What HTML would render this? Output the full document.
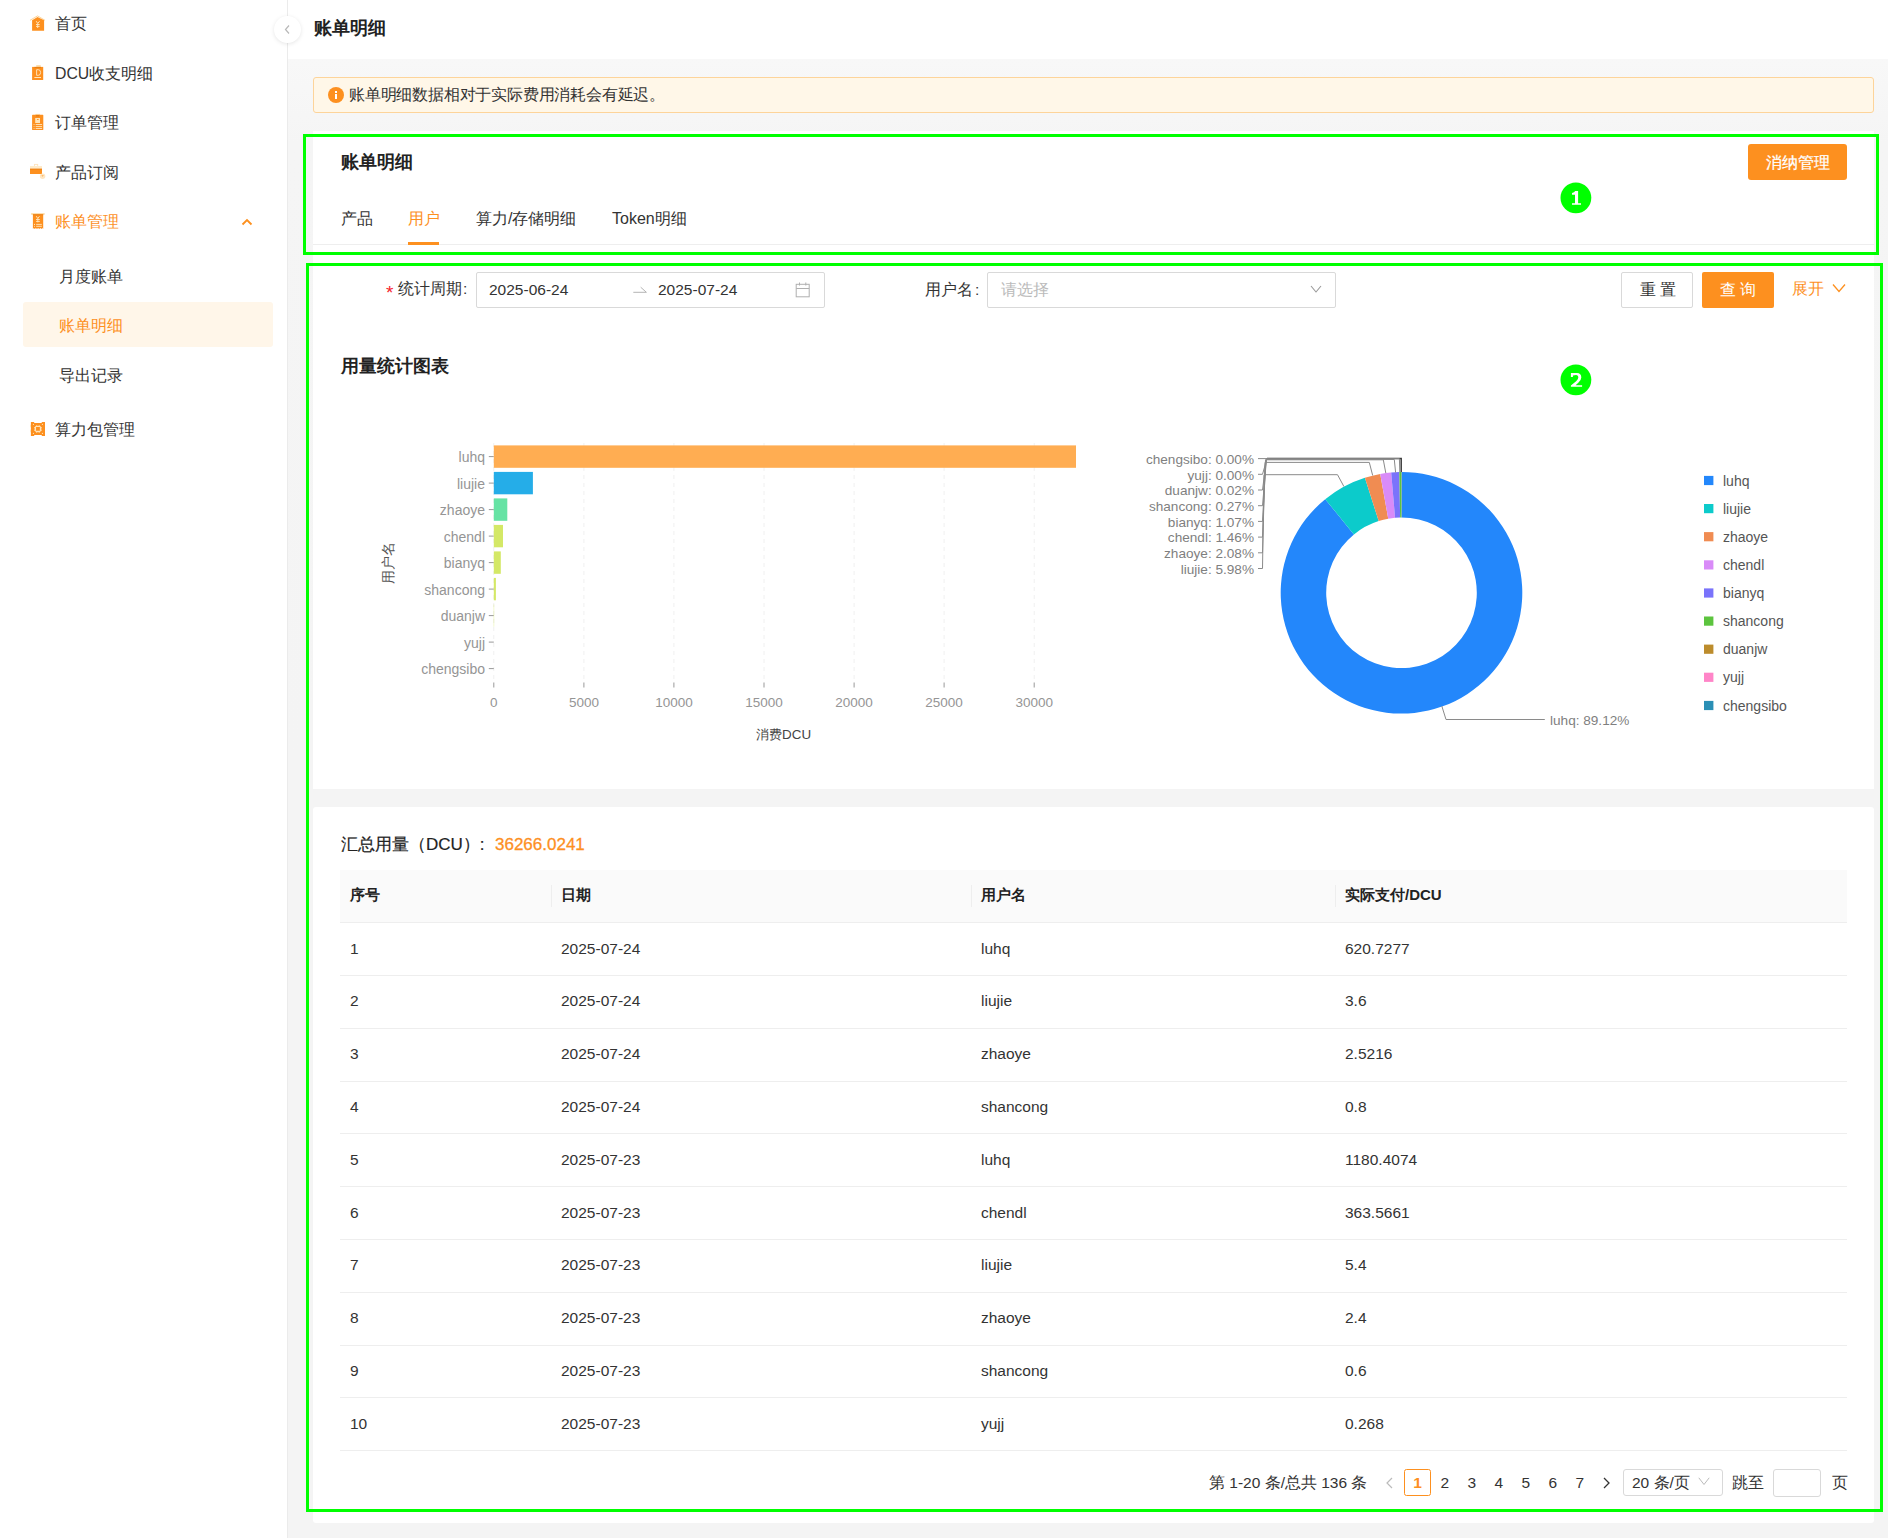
<!DOCTYPE html>
<html><head><meta charset="utf-8">
<style>
*{box-sizing:border-box;margin:0;padding:0}
html,body{width:1888px;height:1538px;overflow:hidden;background:#f4f4f4;font-family:"Liberation Sans",sans-serif;color:#333}
.a{position:absolute}
.t{position:absolute;white-space:nowrap;line-height:20px;height:20px}
.sb{font-size:15.8px;color:#333}

.ico{position:absolute}
.th{font-weight:bold;font-size:15px;color:#222}
.td{font-size:15.5px;color:#333}
.rl{position:absolute;left:340px;width:1507px;height:1px;background:#eeeeee}
.pg{font-size:15.5px;color:#333}
.or{color:#fd901f}
.gb{position:absolute;border:3px solid #00ff00}
.gc{position:absolute;width:31px;height:31px;border-radius:50%;background:#00ff00;color:#fff;font-weight:bold;font-family:"Liberation Mono",monospace;font-size:19px;line-height:31px;text-align:center}
</style></head><body>
<!-- sidebar -->
<div class="a" style="left:0;top:0;width:287px;height:1538px;background:#fff"></div>
<div class="a" style="left:287px;top:0;width:1px;height:1538px;background:#ebebeb"></div>
<!-- header -->
<div class="a" style="left:288px;top:0;width:1600px;height:59px;background:#fff"></div>
<div class="a" style="left:288px;top:59px;width:1600px;height:1479px;background:linear-gradient(#f8f8f8 0px,#f5f5f5 85px,#f4f4f4 700px)"></div>

<!-- sidebar items -->
<div class="t sb" style="left:55px;top:13.5px">首页</div>
<div class="t sb" style="left:55px;top:63.5px">DCU收支明细</div>
<div class="t sb" style="left:55px;top:112.5px">订单管理</div>
<div class="t sb" style="left:55px;top:162.5px">产品订阅</div>
<div class="t sb or" style="left:55px;top:212px">账单管理</div>
<svg class="ico" style="left:240px;top:216.5px" width="14" height="10" viewBox="0 0 14 10"><path d="M2.5 7.5 L7 3 L11.5 7.5" fill="none" stroke="#fd901f" stroke-width="1.8"/></svg>
<div class="t sb" style="left:59px;top:266.5px">月度账单</div>
<div class="a" style="left:23px;top:302px;width:250px;height:45px;background:#fff6e9;border-radius:3px"></div>
<div class="t sb or" style="left:59px;top:315.5px">账单明细</div>
<div class="t sb" style="left:59px;top:365.5px">导出记录</div>
<div class="t sb" style="left:55px;top:419.5px">算力包管理</div>

<!-- sidebar icons -->
<svg class="ico" style="left:26px;top:10px" width="24" height="24" viewBox="0 0 24 24"><polyline points="4,10.3 11.5,5.9 19,10.3" fill="none" stroke="#fdd59a" stroke-width="1"/><path d="M6.1 10.2 L11.5 7 L18.1 10.2 V20.7 H6.1 Z" fill="#fd901f"/><path d="M10.2 11.2 L11.7 13.4 L13.6 11.2 M11.7 13.4 V18 M10 14.5 H13.6 M10 16.4 H13.6" fill="none" stroke="#ffe4b8" stroke-width="1"/></svg>
<svg class="ico" style="left:26px;top:60px" width="24" height="24" viewBox="0 0 24 24"><rect x="10" y="4.9" width="5" height="2.2" rx="1" fill="#fde0b0"/><rect x="6.1" y="6.9" width="11.1" height="13.1" fill="#fd901f"/><rect x="8.5" y="6.9" width="6.5" height="1.2" fill="#e27a12" opacity="0.8"/><path d="M10.6 9.7 H12.3 Q14.6 9.7 14.6 12.5 Q14.6 15.3 12.3 15.3 H10.6 Z" fill="none" stroke="#ffe4b8" stroke-width="0.95"/><rect x="8.4" y="17" width="6.6" height="1" fill="#ffe4b8"/></svg>
<svg class="ico" style="left:26px;top:110px" width="24" height="24" viewBox="0 0 24 24"><rect x="9.4" y="3.9" width="4.6" height="1.1" fill="#fde0b0"/><rect x="6.1" y="4.8" width="11.2" height="15.2" rx="0.6" fill="#fd901f"/><rect x="9.9" y="5" width="3.6" height="1.4" rx="0.7" fill="#e27a12" opacity="0.8"/><rect x="9.2" y="8" width="4.8" height="5" fill="#ffe4b8"/><ellipse cx="11.8" cy="9.4" rx="1" ry="0.5" fill="#fd901f"/><path d="M9.7 14.5 H16.1 M9.7 16.6 H16.1 M9.7 18.5 H16.1" stroke="#ffe4b8" stroke-width="0.95"/><path d="M7.2 14.5 H9 M7.2 16.6 H9 M7.2 18.5 H9" stroke="#fdb868" stroke-width="0.9"/></svg>
<svg class="ico" style="left:24px;top:158px" width="28" height="28" viewBox="0 0 28 28"><rect x="10.4" y="6.4" width="3.3" height="2" fill="none" stroke="#fee3bd" stroke-width="0.9"/><rect x="6" y="8" width="12" height="2.7" fill="#feebcb"/><rect x="6" y="10.7" width="12" height="5.3" fill="#fd901f"/><rect x="6" y="10.7" width="12" height="0.9" fill="#e27a12" opacity="0.7"/><circle cx="18.6" cy="18.2" r="2.7" fill="#fee6c2"/><path d="M17.4 17.4 L18.6 18.6 L19.8 17.4 Z" fill="#fd901f"/></svg>
<svg class="ico" style="left:26px;top:209px" width="24" height="24" viewBox="0 0 24 24"><rect x="5.1" y="4" width="13.6" height="1.9" fill="#fee0b0"/><path d="M6.9 5.3 H17.2 V20 L16.3 18.9 L15.4 20 L14.3 18.9 L13.2 20 L12.1 18.9 L11 20 L9.9 18.9 L8.8 20 L7.8 18.9 L6.9 20 Z" fill="#fd901f"/><rect x="6.9" y="5.3" width="10.3" height="0.9" fill="#e27a12" opacity="0.8"/><path d="M10.3 7.2 L11.8 9.5 L13.5 7.2 M11.8 9.5 V13.4 M10 10.5 H13.8 M10 12.4 H13.8 M10.2 15.4 H15.8 M10.2 17.3 H15.8" fill="none" stroke="#ffe4b8" stroke-width="0.95"/><circle cx="8.5" cy="15.4" r="0.55" fill="#ffe4b8"/><circle cx="8.5" cy="17.3" r="0.55" fill="#ffe4b8"/></svg>
<svg class="ico" style="left:25px;top:416px" width="26" height="26" viewBox="0 0 26 26"><path d="M5.9 5.9 H9.1 L9.3 6.9 H16.6 L16.9 5.9 H20 V20 H16.9 L16.6 19 H9.3 L9.1 20 H5.9 Z" fill="#fd901f"/><rect x="5.2" y="8.7" width="0.7" height="2.6" fill="#fedca8"/><rect x="5.2" y="13.6" width="0.7" height="2.6" fill="#fedca8"/><circle cx="8.4" cy="8.4" r="0.55" fill="#ffe4b8"/><circle cx="17.4" cy="8.4" r="0.55" fill="#ffe4b8"/><circle cx="8.4" cy="17.4" r="0.55" fill="#ffe4b8"/><circle cx="17.4" cy="17.4" r="0.55" fill="#ffe4b8"/><path d="M11.5 9.4 L11.5 10.2 H14.4 L14.4 9.4 M11.5 16.6 L11.5 15.8 H14.4 L14.4 16.6 M9.2 11.5 H10 V14.4 H9.2 M16.7 11.5 H15.9 V14.4 H16.7" fill="none" stroke="#ffe4b8" stroke-width="0.9"/><rect x="10.5" y="10.5" width="4.9" height="4.9" rx="0.6" fill="none" stroke="#ffe4b8" stroke-width="1.1"/></svg>
<!-- collapse btn -->
<div class="a" style="left:274px;top:16px;width:27px;height:27px;border-radius:50%;background:#fff;box-shadow:0 1px 4px rgba(0,0,0,0.10)"></div>
<svg class="ico" style="left:282px;top:23px" width="10" height="13" viewBox="0 0 10 13"><path d="M7 2.5 L3.5 6.5 L7 10.5" fill="none" stroke="#b8b8b8" stroke-width="1.2"/></svg>

<!-- header title -->
<div class="t" style="left:314px;top:18px;font-size:18px;font-weight:bold;color:#222">账单明细</div>

<!-- alert -->
<div class="a" style="left:313px;top:77px;width:1561px;height:36px;background:#fff7e8;border:1px solid #fdd49a;border-radius:3px"></div>
<div class="a" style="left:328px;top:87px;width:16px;height:16px;border-radius:50%;background:#fd901f"></div>
<div class="a" style="left:335px;top:91px;width:2px;height:2px;background:#fff"></div>
<div class="a" style="left:335px;top:94px;width:2px;height:5px;background:#fff"></div>
<div class="t" style="left:349px;top:85px;font-size:16px;letter-spacing:-0.2px;color:#333">账单明细数据相对于实际费用消耗会有延迟。</div>

<!-- card 1 -->
<div class="a" style="left:313px;top:131px;width:1561px;height:132px;background:#fff"></div>
<div class="t" style="left:341px;top:152px;font-size:18px;font-weight:bold;color:#222">账单明细</div>
<div class="a" style="left:1748px;top:144px;width:99px;height:36px;background:#fd901f;border-radius:3px"></div>
<div class="t" style="left:1766px;top:153px;font-size:16px;color:#fff;-webkit-text-stroke:0.25px #fff">消纳管理</div>
<div class="t" style="left:341px;top:209px;font-size:16px">产品</div>
<div class="t or" style="left:408px;top:209px;font-size:16px">用户</div>
<div class="t" style="left:476px;top:209px;font-size:16px">算力/存储明细</div>
<div class="t" style="left:612px;top:209px;font-size:16px">Token明细</div>
<div class="a" style="left:313px;top:244px;width:1561px;height:1px;background:#eeeeee"></div>
<div class="a" style="left:408px;top:242px;width:31px;height:3px;background:#fd901f"></div>

<!-- card 2 -->
<div class="a" style="left:313px;top:262px;width:1561px;height:527px;background:#fff"></div>
<div class="t" style="left:386px;top:283px;font-size:19px;color:#f5222d">*</div>
<div class="t" style="left:398px;top:279px;font-size:15.5px">统计周期<span style="margin-left:1px">:</span></div>
<div class="a" style="left:476px;top:272px;width:349px;height:36px;border:1px solid #d9d9d9;border-radius:2px"></div>
<div class="t" style="left:489px;top:280px;font-size:15.5px">2025-06-24</div>
<svg class="ico" style="left:630px;top:284px" width="20" height="12" viewBox="0 0 20 12"><path d="M3.3 8.3 H16.4 L10.7 3.2" fill="none" stroke="#b5b5b5" stroke-width="1"/></svg>
<div class="t" style="left:658px;top:280px;font-size:15.5px">2025-07-24</div>
<svg class="ico" style="left:794px;top:281px" width="17" height="17" viewBox="0 0 17 17"><rect x="2.2" y="3.3" width="13" height="12.5" fill="none" stroke="#b0b0b0" stroke-width="1"/><path d="M2.2 7.5 H15.2 M5.5 1.5 V4.5 M11.8 1.5 V4.5" stroke="#b0b0b0" stroke-width="1"/></svg>
<div class="t" style="left:925px;top:280px;font-size:15.5px">用户名<span style="margin-left:2px">:</span></div>
<div class="a" style="left:987px;top:272px;width:349px;height:36px;border:1px solid #d9d9d9;border-radius:2px"></div>
<div class="t" style="left:1001px;top:280px;font-size:15.5px;color:#bbb">请选择</div>
<svg class="ico" style="left:1309px;top:283px" width="14" height="12" viewBox="0 0 14 12"><path d="M2 3 L7 9 L12 3" fill="none" stroke="#999" stroke-width="1.1"/></svg>
<div class="a" style="left:1621px;top:272px;width:72px;height:36px;border:1px solid #d9d9d9;border-radius:2px;background:#fff"></div>
<div class="t" style="left:1640px;top:280px;font-size:16px;letter-spacing:4px">重置</div>
<div class="a" style="left:1702px;top:272px;width:72px;height:36px;background:#fd901f;border-radius:2px"></div>
<div class="t" style="left:1720px;top:280px;font-size:16px;color:#fff;letter-spacing:4px">查询</div>
<div class="t or" style="left:1792px;top:279px;font-size:15.5px">展开</div>
<svg class="ico" style="left:1831px;top:282px" width="16" height="14" viewBox="0 0 16 14"><path d="M2 2.5 L8 9.5 L14 2.5" fill="none" stroke="#fd901f" stroke-width="1.3"/></svg>

<div class="t" style="left:341px;top:356px;font-size:18px;font-weight:bold;color:#222">用量统计图表</div>

<!--CHART-->
<svg class="a" style="left:0;top:0" width="1888" height="800" viewBox="0 0 1888 800" font-family="Liberation Sans, sans-serif">
<line x1="493.8" y1="443" x2="493.8" y2="682" stroke="#f0f0f0" stroke-width="1" stroke-dasharray="4,4"/>
<line x1="493.8" y1="682.5" x2="493.8" y2="687.5" stroke="#999" stroke-width="1"/>
<text x="493.8" y="706.5" font-size="13.5" fill="#959595" text-anchor="middle">0</text>
<line x1="583.9" y1="443" x2="583.9" y2="682" stroke="#f0f0f0" stroke-width="1" stroke-dasharray="4,4"/>
<line x1="583.9" y1="682.5" x2="583.9" y2="687.5" stroke="#999" stroke-width="1"/>
<text x="583.9" y="706.5" font-size="13.5" fill="#959595" text-anchor="middle">5000</text>
<line x1="673.9" y1="443" x2="673.9" y2="682" stroke="#f0f0f0" stroke-width="1" stroke-dasharray="4,4"/>
<line x1="673.9" y1="682.5" x2="673.9" y2="687.5" stroke="#999" stroke-width="1"/>
<text x="673.9" y="706.5" font-size="13.5" fill="#959595" text-anchor="middle">10000</text>
<line x1="764.0" y1="443" x2="764.0" y2="682" stroke="#f0f0f0" stroke-width="1" stroke-dasharray="4,4"/>
<line x1="764.0" y1="682.5" x2="764.0" y2="687.5" stroke="#999" stroke-width="1"/>
<text x="764.0" y="706.5" font-size="13.5" fill="#959595" text-anchor="middle">15000</text>
<line x1="854.1" y1="443" x2="854.1" y2="682" stroke="#f0f0f0" stroke-width="1" stroke-dasharray="4,4"/>
<line x1="854.1" y1="682.5" x2="854.1" y2="687.5" stroke="#999" stroke-width="1"/>
<text x="854.1" y="706.5" font-size="13.5" fill="#959595" text-anchor="middle">20000</text>
<line x1="944.1" y1="443" x2="944.1" y2="682" stroke="#f0f0f0" stroke-width="1" stroke-dasharray="4,4"/>
<line x1="944.1" y1="682.5" x2="944.1" y2="687.5" stroke="#999" stroke-width="1"/>
<text x="944.1" y="706.5" font-size="13.5" fill="#959595" text-anchor="middle">25000</text>
<line x1="1034.2" y1="443" x2="1034.2" y2="682" stroke="#f0f0f0" stroke-width="1" stroke-dasharray="4,4"/>
<line x1="1034.2" y1="682.5" x2="1034.2" y2="687.5" stroke="#999" stroke-width="1"/>
<text x="1034.2" y="706.5" font-size="13.5" fill="#959595" text-anchor="middle">30000</text>
<line x1="488.8" y1="456.6" x2="493.8" y2="456.6" stroke="#999" stroke-width="1"/>
<text x="485" y="462.0" font-size="14" fill="#959595" text-anchor="end">luhq</text>
<rect x="493.8" y="445.4" width="582.2" height="22.4" fill="#ffad52"/>
<line x1="488.8" y1="483.1" x2="493.8" y2="483.1" stroke="#999" stroke-width="1"/>
<text x="485" y="488.5" font-size="14" fill="#959595" text-anchor="end">liujie</text>
<rect x="493.8" y="471.9" width="39.1" height="22.4" fill="#25ade8"/>
<line x1="488.8" y1="509.6" x2="493.8" y2="509.6" stroke="#999" stroke-width="1"/>
<text x="485" y="515.0" font-size="14" fill="#959595" text-anchor="end">zhaoye</text>
<rect x="493.8" y="498.4" width="13.5" height="22.4" fill="#66e3a4"/>
<line x1="488.8" y1="536.1" x2="493.8" y2="536.1" stroke="#999" stroke-width="1"/>
<text x="485" y="541.5" font-size="14" fill="#959595" text-anchor="end">chendl</text>
<rect x="493.8" y="524.9" width="9.2" height="22.4" fill="#d4e866"/>
<line x1="488.8" y1="562.6" x2="493.8" y2="562.6" stroke="#999" stroke-width="1"/>
<text x="485" y="568.0" font-size="14" fill="#959595" text-anchor="end">bianyq</text>
<rect x="493.8" y="551.4" width="7.0" height="22.4" fill="#d4e866"/>
<line x1="488.8" y1="589.1" x2="493.8" y2="589.1" stroke="#999" stroke-width="1"/>
<text x="485" y="594.5" font-size="14" fill="#959595" text-anchor="end">shancong</text>
<rect x="493.8" y="577.9" width="2.1" height="22.4" fill="#d4e866"/>
<line x1="488.8" y1="615.6" x2="493.8" y2="615.6" stroke="#999" stroke-width="1"/>
<text x="485" y="621.0" font-size="14" fill="#959595" text-anchor="end">duanjw</text>
<rect x="493.8" y="604.4" width="0.3" height="22.4" fill="#d4e866"/>
<line x1="488.8" y1="642.1" x2="493.8" y2="642.1" stroke="#999" stroke-width="1"/>
<text x="485" y="647.5" font-size="14" fill="#959595" text-anchor="end">yujj</text>
<line x1="488.8" y1="668.6" x2="493.8" y2="668.6" stroke="#999" stroke-width="1"/>
<text x="485" y="674.0" font-size="14" fill="#959595" text-anchor="end">chengsibo</text>
<text transform="translate(393,563) rotate(-90)" font-size="13.5" fill="#555" text-anchor="middle">用户名</text>
<text x="783.6" y="739" font-size="13.4" fill="#444" text-anchor="middle">消费DCU</text>
<path d="M1401.50,472.00 A120.8,120.8 0 1 1 1325.20,499.14 L1353.94,534.42 A75.3,75.3 0 1 0 1401.50,517.50 Z" fill="#2387fb"/>
<path d="M1325.20,499.14 A120.8,120.8 0 0 1 1364.89,477.68 L1378.68,521.04 A75.3,75.3 0 0 0 1353.94,534.42 Z" fill="#0ccbcb"/>
<path d="M1364.89,477.68 A120.8,120.8 0 0 1 1380.21,473.89 L1388.23,518.68 A75.3,75.3 0 0 0 1378.68,521.04 Z" fill="#f08c52"/>
<path d="M1380.21,473.89 A120.8,120.8 0 0 1 1391.19,472.44 L1395.07,517.77 A75.3,75.3 0 0 0 1388.23,518.68 Z" fill="#d98bf8"/>
<path d="M1391.19,472.44 A120.8,120.8 0 0 1 1399.30,472.02 L1400.13,517.51 A75.3,75.3 0 0 0 1395.07,517.77 Z" fill="#7a73fb"/>
<path d="M1399.30,472.02 A120.8,120.8 0 0 1 1401.35,472.00 L1401.41,517.50 A75.3,75.3 0 0 0 1400.13,517.51 Z" fill="#5cc43e"/>
<path d="M1401.35,472.00 A120.8,120.8 0 0 1 1401.50,472.00 L1401.50,517.50 A75.3,75.3 0 0 0 1401.41,517.50 Z" fill="#bc8c2c"/>
<text x="1254" y="463.8" font-size="13.6" fill="#7f7f7f" text-anchor="end">chengsibo: 0.00%</text>
<text x="1254" y="479.5" font-size="13.6" fill="#7f7f7f" text-anchor="end">yujj: 0.00%</text>
<text x="1254" y="495.2" font-size="13.6" fill="#7f7f7f" text-anchor="end">duanjw: 0.02%</text>
<text x="1254" y="510.9" font-size="13.6" fill="#7f7f7f" text-anchor="end">shancong: 0.27%</text>
<text x="1254" y="526.6" font-size="13.6" fill="#7f7f7f" text-anchor="end">bianyq: 1.07%</text>
<text x="1254" y="542.3" font-size="13.6" fill="#7f7f7f" text-anchor="end">chendl: 1.46%</text>
<text x="1254" y="558.0" font-size="13.6" fill="#7f7f7f" text-anchor="end">zhaoye: 2.08%</text>
<text x="1254" y="573.7" font-size="13.6" fill="#7f7f7f" text-anchor="end">liujie: 5.98%</text>
<polyline points="1258.0,458.6 1267.0,458.6" fill="none" stroke="#8a8a8a" stroke-width="1"/>
<polyline points="1267.0,458.6 1401.2,458.6 1401.2,472.0" fill="none" stroke="#3c3c3c" stroke-width="1.5"/>
<polyline points="1258.0,474.3 1262.5,474.3 1267.0,458.6" fill="none" stroke="#8a8a8a" stroke-width="1"/>
<polyline points="1258.0,490.0 1262.5,490.0 1266.5,458.6" fill="none" stroke="#8a8a8a" stroke-width="1"/>
<polyline points="1258.0,505.7 1262.5,505.7 1266.5,458.6 1399.4,458.6 1399.8,472.0" fill="none" stroke="#8a8a8a" stroke-width="1"/>
<polyline points="1258.0,521.4 1262.5,521.4 1266.0,459.5 1394.3,459.5 1395.6,472.5" fill="none" stroke="#8a8a8a" stroke-width="1"/>
<polyline points="1258.0,537.1 1262.5,537.1 1265.5,459.8 1383.3,459.8 1385.8,473.0" fill="none" stroke="#8a8a8a" stroke-width="1"/>
<polyline points="1258.0,552.8 1262.5,552.8 1265.0,462.4 1369.3,462.4 1372.7,475.5" fill="none" stroke="#8a8a8a" stroke-width="1"/>
<polyline points="1258.0,568.5 1262.5,568.5 1264.0,474.7 1337.5,474.7 1343.9,486.5" fill="none" stroke="#8a8a8a" stroke-width="1"/>
<polyline points="1441.8,706.0 1446.0,719.5 1544.8,719.5" fill="none" stroke="#8a8a8a" stroke-width="1"/>
<text x="1550" y="725.2" font-size="13.6" fill="#7f7f7f">luhq: 89.12%</text>
<rect x="1704" y="475.9" width="9.4" height="9.2" fill="#2387fb"/>
<text x="1723" y="485.5" font-size="14" fill="#555">luhq</text>
<rect x="1704" y="504.0" width="9.4" height="9.2" fill="#0ccbcb"/>
<text x="1723" y="513.6" font-size="14" fill="#555">liujie</text>
<rect x="1704" y="532.1" width="9.4" height="9.2" fill="#f08c52"/>
<text x="1723" y="541.7" font-size="14" fill="#555">zhaoye</text>
<rect x="1704" y="560.3" width="9.4" height="9.2" fill="#d98bf8"/>
<text x="1723" y="569.9" font-size="14" fill="#555">chendl</text>
<rect x="1704" y="588.4" width="9.4" height="9.2" fill="#7a73fb"/>
<text x="1723" y="598.0" font-size="14" fill="#555">bianyq</text>
<rect x="1704" y="616.5" width="9.4" height="9.2" fill="#5cc43e"/>
<text x="1723" y="626.1" font-size="14" fill="#555">shancong</text>
<rect x="1704" y="644.6" width="9.4" height="9.2" fill="#bc8c2c"/>
<text x="1723" y="654.2" font-size="14" fill="#555">duanjw</text>
<rect x="1704" y="672.7" width="9.4" height="9.2" fill="#ff85c8"/>
<text x="1723" y="682.3" font-size="14" fill="#555">yujj</text>
<rect x="1704" y="700.9" width="9.4" height="9.2" fill="#2a8fb5"/>
<text x="1723" y="710.5" font-size="14" fill="#555">chengsibo</text>
</svg>
<!--/CHART-->

<!-- card 3 -->
<div class="a" style="left:313px;top:807px;width:1561px;height:716px;background:#fff;border-radius:3px"></div>
<div class="t" style="left:341px;top:834.5px;font-size:17px;color:#222;-webkit-text-stroke:0.2px #222">汇总用量（DCU）:</div>
<div class="t or" style="left:495px;top:834.5px;font-size:17px;-webkit-text-stroke:0.3px #fd901f">36266.0241</div>

<div class="a" style="left:340px;top:870px;width:1507px;height:53px;background:#fafafa;border-bottom:1px solid #eeeeee"></div>
<div class="a" style="left:551px;top:885px;width:1px;height:22px;background:#eeeeee"></div>
<div class="a" style="left:971px;top:885px;width:1px;height:22px;background:#eeeeee"></div>
<div class="a" style="left:1335px;top:885px;width:1px;height:22px;background:#eeeeee"></div>
<div class="t th" style="left:350px;top:885px">序号</div>
<div class="t th" style="left:561px;top:885px">日期</div>
<div class="t th" style="left:981px;top:885px">用户名</div>
<div class="t th" style="left:1345px;top:885px">实际支付/DCU</div>
<div class="t td" style="left:350px;top:938.5px">1</div>
<div class="t td" style="left:561px;top:938.5px">2025-07-24</div>
<div class="t td" style="left:981px;top:938.5px">luhq</div>
<div class="t td" style="left:1345px;top:938.5px">620.7277</div>
<div class="rl" style="top:975.0px"></div>
<div class="t td" style="left:350px;top:991.3px">2</div>
<div class="t td" style="left:561px;top:991.3px">2025-07-24</div>
<div class="t td" style="left:981px;top:991.3px">liujie</div>
<div class="t td" style="left:1345px;top:991.3px">3.6</div>
<div class="rl" style="top:1027.8px"></div>
<div class="t td" style="left:350px;top:1044.1px">3</div>
<div class="t td" style="left:561px;top:1044.1px">2025-07-24</div>
<div class="t td" style="left:981px;top:1044.1px">zhaoye</div>
<div class="t td" style="left:1345px;top:1044.1px">2.5216</div>
<div class="rl" style="top:1080.6px"></div>
<div class="t td" style="left:350px;top:1096.9px">4</div>
<div class="t td" style="left:561px;top:1096.9px">2025-07-24</div>
<div class="t td" style="left:981px;top:1096.9px">shancong</div>
<div class="t td" style="left:1345px;top:1096.9px">0.8</div>
<div class="rl" style="top:1133.4px"></div>
<div class="t td" style="left:350px;top:1149.7px">5</div>
<div class="t td" style="left:561px;top:1149.7px">2025-07-23</div>
<div class="t td" style="left:981px;top:1149.7px">luhq</div>
<div class="t td" style="left:1345px;top:1149.7px">1180.4074</div>
<div class="rl" style="top:1186.2px"></div>
<div class="t td" style="left:350px;top:1202.5px">6</div>
<div class="t td" style="left:561px;top:1202.5px">2025-07-23</div>
<div class="t td" style="left:981px;top:1202.5px">chendl</div>
<div class="t td" style="left:1345px;top:1202.5px">363.5661</div>
<div class="rl" style="top:1239.0px"></div>
<div class="t td" style="left:350px;top:1255.3px">7</div>
<div class="t td" style="left:561px;top:1255.3px">2025-07-23</div>
<div class="t td" style="left:981px;top:1255.3px">liujie</div>
<div class="t td" style="left:1345px;top:1255.3px">5.4</div>
<div class="rl" style="top:1291.8px"></div>
<div class="t td" style="left:350px;top:1308.1px">8</div>
<div class="t td" style="left:561px;top:1308.1px">2025-07-23</div>
<div class="t td" style="left:981px;top:1308.1px">zhaoye</div>
<div class="t td" style="left:1345px;top:1308.1px">2.4</div>
<div class="rl" style="top:1344.6px"></div>
<div class="t td" style="left:350px;top:1360.9px">9</div>
<div class="t td" style="left:561px;top:1360.9px">2025-07-23</div>
<div class="t td" style="left:981px;top:1360.9px">shancong</div>
<div class="t td" style="left:1345px;top:1360.9px">0.6</div>
<div class="rl" style="top:1397.4px"></div>
<div class="t td" style="left:350px;top:1413.7px">10</div>
<div class="t td" style="left:561px;top:1413.7px">2025-07-23</div>
<div class="t td" style="left:981px;top:1413.7px">yujj</div>
<div class="t td" style="left:1345px;top:1413.7px">0.268</div>
<div class="rl" style="top:1450.2px"></div>

<!-- pagination -->
<div class="t pg" style="left:1209px;top:1473px">第 1-20 条/总共 136 条</div>
<svg class="ico" style="left:1383px;top:1476px" width="14" height="14" viewBox="0 0 14 14"><path d="M9 2 L4 7 L9 12" fill="none" stroke="#bbb" stroke-width="1.2"/></svg>
<div class="a" style="left:1404px;top:1469px;width:27px;height:26.5px;border:1px solid #fd901f;border-radius:2.5px"></div>
<div class="t pg or" style="left:1404px;top:1473px;width:27px;text-align:center;font-weight:bold">1</div>
<div class="t pg" style="left:1440.5px;top:1473px">2</div>
<div class="t pg" style="left:1467.5px;top:1473px">3</div>
<div class="t pg" style="left:1494.5px;top:1473px">4</div>
<div class="t pg" style="left:1521.5px;top:1473px">5</div>
<div class="t pg" style="left:1548.5px;top:1473px">6</div>
<div class="t pg" style="left:1575.5px;top:1473px">7</div>
<svg class="ico" style="left:1599px;top:1476px" width="14" height="14" viewBox="0 0 14 14"><path d="M5 2 L10 7 L5 12" fill="none" stroke="#333" stroke-width="1.3"/></svg>
<div class="a" style="left:1623px;top:1469px;width:99.5px;height:26.5px;border:1px solid #d9d9d9;border-radius:3px"></div>
<div class="t pg" style="left:1632px;top:1473px">20 条/页</div>
<svg class="ico" style="left:1697px;top:1476px" width="14" height="11" viewBox="0 0 14 11"><path d="M1.8 1.8 L7 8.5 L12.2 1.8" fill="none" stroke="#bbb" stroke-width="1"/></svg>
<div class="t pg" style="left:1732px;top:1473px">跳至</div>
<div class="a" style="left:1773px;top:1469px;width:48px;height:28px;border:1px solid #d9d9d9;border-radius:3px"></div>
<div class="t pg" style="left:1832px;top:1473px">页</div>

<!-- green annotation boxes -->
<div class="gb" style="left:303px;top:134px;width:1576px;height:121px"></div>
<svg class="ico" style="left:1555px;top:175px" width="45" height="45" viewBox="0 0 45 45"><circle cx="20.9" cy="22.8" r="15.4" fill="#00ff00"/><path d="M17 18.1 V19.7 H20 V28.2 H17 V29.8 H26 V28.2 H23.1 V16.1 H20.2 Q19.4 17.6 17 18.1 Z" fill="#fff"/></svg>
<div class="gb" style="left:306px;top:263px;width:1577px;height:1249px"></div>
<svg class="ico" style="left:1555px;top:357px" width="45" height="45" viewBox="0 0 45 45"><circle cx="20.9" cy="22.8" r="15.4" fill="#00ff00"/><path d="M15.9 16 H22 Q26.3 16 26.3 20.6 Q26.3 23.2 23.3 25.8 L20.6 28.2 H27.1 V29.8 H15.9 V28.5 L21.1 24.2 Q23.3 22.3 23.3 20.6 Q23.3 18 21 18 Q19.2 18 17.9 18.4 V20.1 H15.9 Z" fill="#fff"/></svg>
</body></html>
